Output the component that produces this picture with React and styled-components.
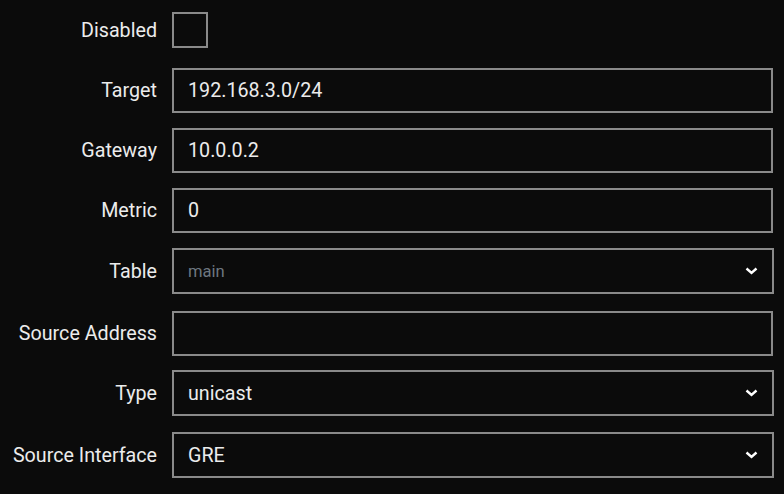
import React from 'react';
import styled, { createGlobalStyle } from 'styled-components';

const GlobalStyle = createGlobalStyle`
  html, body {
    margin: 0;
    padding: 0;
    background: #0b0b0b;
  }
  body {
    font-family: Roboto, "Liberation Sans", sans-serif;
    color: #e6e6e6;
  }
`;

const Form = styled.div`
  display: flex;
  flex-direction: column;
  padding: 12px 10px 0 0;
  width: 784px;
  box-sizing: border-box;
`;

const Row = styled.div`
  display: grid;
  grid-template-columns: 157px 1fr;
  column-gap: 15px;
  align-items: center;
  margin-bottom: ${(p) => p.gap}px;
`;

const Label = styled.label`
  text-align: right;
  font-size: 19.7px;
  color: #ececec;
  white-space: nowrap;
`;

const Box = styled.div`
  box-sizing: border-box;
  height: ${(p) => p.h || 45}px;
  border: 2px solid #8a8a8a;
  background: #0b0b0b;
  display: flex;
  align-items: center;
  padding: 0 14px;
  font-size: ${(p) => (p.muted ? 16.6 : 19.7)}px;
  color: ${(p) => (p.muted ? '#6e7780' : '#ececec')};
  margin-right: ${(p) => (p.select ? 0 : 1)}px;
`;

const Check = styled.div`
  box-sizing: border-box;
  width: 36px;
  height: 36px;
  border: 2px solid #8a8a8a;
  background: #0b0b0b;
`;

const Value = styled.span`
  flex: 1;
`;

const Chevron = () => (
  <svg width="13" height="8" viewBox="0 0 13 8">
    <path d="M1.5 1.5 L6.5 6 L11.5 1.5" fill="none" stroke="#fff" strokeWidth="2.4" />
  </svg>
);

const fields = [
  { label: 'Target', value: '192.168.3.0/24', gap: 15 },
  { label: 'Gateway', value: '10.0.0.2', gap: 15 },
  { label: 'Metric', value: '0', gap: 15 },
  { label: 'Table', value: 'main', select: true, muted: true, gap: 17, h: 46 },
  { label: 'Source Address', value: '', gap: 14 },
  { label: 'Type', value: 'unicast', select: true, gap: 16, h: 46 },
  { label: 'Source Interface', value: 'GRE', select: true, gap: 0, h: 46 },
];

export default function App() {
  return (
    <>
      <GlobalStyle />
      <Form>
        <Row gap={20}>
          <Label>Disabled</Label>
          <Check />
        </Row>
        {fields.map((f) => (
          <Row key={f.label} gap={f.gap}>
            <Label>{f.label}</Label>
            <Box select={f.select} muted={f.muted} h={f.h}>
              <Value>{f.value}</Value>
              {f.select && <Chevron />}
            </Box>
          </Row>
        ))}
      </Form>
    </>
  );
}
